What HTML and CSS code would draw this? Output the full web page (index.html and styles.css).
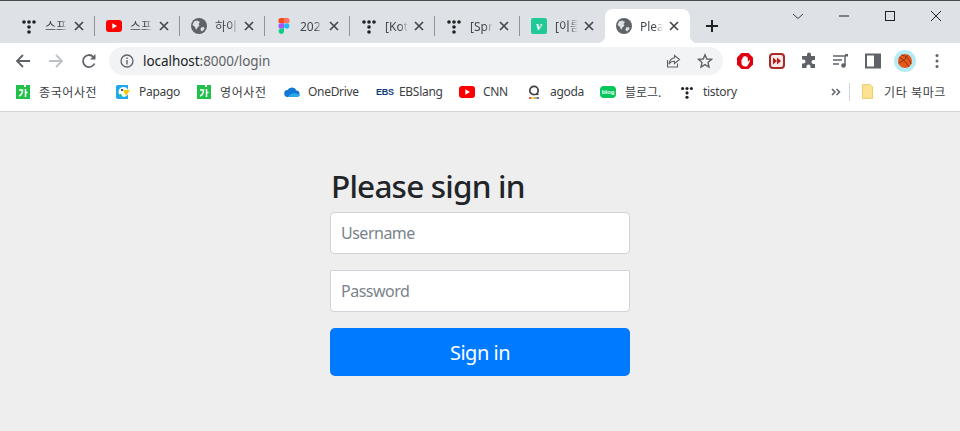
FILE: index.html
```html
<!DOCTYPE html>
<html lang="ko">
<head>
  <meta charset="UTF-8">
  <title>Please sign in</title>
  <link rel="stylesheet" href="styles.css">
</head>
<body>

<svg class="defs" width="0" height="0">
  <symbol id="tistory" viewBox="0 0 16 16">
    <circle cx="3" cy="4" r="1.8"/><circle cx="8" cy="4" r="1.8"/><circle cx="13" cy="4" r="1.8"/>
    <circle cx="8" cy="9" r="1.8"/><circle cx="8" cy="14" r="1.8"/>
  </symbol>
  <symbol id="globe" viewBox="0 0 16 16">
    <circle cx="8" cy="8" r="8" fill="#5f6368"/>
    <path d="M3 3.500 6 2.500 9 4 7.500 6 8.500 7.500 6.500 9.500 5 12 4 9 1.500 7ZM10 9.500 13 9 13.500 11 11 13.500 9.500 12Z" fill="#dee1e6"/>
  </symbol>
  <symbol id="youtube" viewBox="0 0 16 12">
    <rect width="16" height="12" rx="3" fill="#f00"/><path d="M6.300 3.300 11 6 6.300 8.700Z" fill="#fff"/>
  </symbol>
  <symbol id="naver" viewBox="0 0 14 14">
    <path d="M0 0H8V2H10V0H14V14H0Z" fill="#21c04a"/>
    <path d="M3 5H6.500C6.500 8 5.500 10 3 11M9.500 4V12M9.500 7.500H11.500" fill="none" stroke="#fff" stroke-width="1.500"/>
  </symbol>
  <symbol id="close" viewBox="0 0 10 10">
    <path d="M1 1 9 9M9 1 1 9" fill="none" stroke="#45494e" stroke-width="1.700"/>
  </symbol>
</svg>

<div class="tabstrip">
  <div class="tab">
    <svg class="favicon" fill="#202124"><use href="#tistory"/></svg>
    <span class="tab-title">스프</span><svg class="tab-close"><use href="#close"/></svg>
  </div>
  <div class="tab">
    <svg class="favicon"><use href="#youtube"/></svg>
    <span class="tab-title">스프</span><svg class="tab-close"><use href="#close"/></svg>
  </div>
  <div class="tab">
    <svg class="favicon"><use href="#globe"/></svg>
    <span class="tab-title">하이</span><svg class="tab-close"><use href="#close"/></svg>
  </div>
  <div class="tab">
    <svg class="favicon" viewBox="0 0 16 16">
      <path d="M5 0H8V5.300H5A2.650 2.650 0 0 1 5 0Z" fill="#f24e1e"/>
      <path d="M8 0H11A2.650 2.650 0 0 1 11 5.300H8Z" fill="#ff7262"/>
      <path d="M5 5.300H8V10.600H5A2.650 2.650 0 0 1 5 5.300Z" fill="#a259ff"/>
      <circle cx="10.700" cy="8" r="2.650" fill="#1abcfe"/>
      <path d="M5 10.600H8V13.300A2.650 2.650 0 1 1 5 10.600Z" fill="#0acf83"/>
    </svg>
    <span class="tab-title">202</span><svg class="tab-close"><use href="#close"/></svg>
  </div>
  <div class="tab">
    <svg class="favicon" fill="#202124"><use href="#tistory"/></svg>
    <span class="tab-title">[Kot</span><svg class="tab-close"><use href="#close"/></svg>
  </div>
  <div class="tab">
    <svg class="favicon" fill="#202124"><use href="#tistory"/></svg>
    <span class="tab-title">[Spr</span><svg class="tab-close"><use href="#close"/></svg>
  </div>
  <div class="tab tab-last">
    <span class="favicon velog">v</span>
    <span class="tab-title">[이름</span><svg class="tab-close"><use href="#close"/></svg>
  </div>
  <div class="tab tab-active">
    <svg class="favicon"><use href="#globe"/></svg>
    <span class="tab-title">Plea</span><svg class="tab-close"><use href="#close"/></svg>
  </div>
  <svg class="new-tab" viewBox="0 0 14 14"><path d="M7 1V13M1 7H13" fill="none" stroke="#202124" stroke-width="2"/></svg>
  <div class="window-controls">
    <svg viewBox="0 0 12 12"><path d="M1 4 6 8.500 11 4" fill="none" stroke="#3c4043"/></svg>
    <svg viewBox="0 0 12 12"><path d="M1 6H11" stroke="#202124"/></svg>
    <svg viewBox="0 0 12 12"><rect x="1.500" y="1.500" width="9" height="9" fill="none" stroke="#202124"/></svg>
    <svg viewBox="0 0 12 12"><path d="M1 1 11 11M11 1 1 11" stroke="#202124"/></svg>
  </div>
</div>

<div class="toolbar">
  <svg class="nav-icon" viewBox="0 0 16 16"><path d="M15 8H2M8 2 2 8 8 14" fill="none" stroke="#5f6368" stroke-width="1.800"/></svg>
  <svg class="nav-icon" viewBox="0 0 16 16"><path d="M1 8H14M8 2 14 8 8 14" fill="none" stroke="#bdc1c6" stroke-width="1.800"/></svg>
  <svg class="nav-icon" viewBox="0 0 16 16"><path d="M13.500 10.500A6 6 0 1 1 12.300 3.800" fill="none" stroke="#5f6368" stroke-width="1.800"/><path d="M14.500 1V6.500H9Z" fill="#5f6368"/></svg>
  <div class="omnibox">
    <svg class="info" viewBox="0 0 14 14"><circle cx="7" cy="7" r="6" fill="none" stroke="#5f6368" stroke-width="1.300"/><path d="M7 6V10.500M7 3.500V5" stroke="#5f6368" stroke-width="1.400"/></svg>
    <span class="url"><span class="url-host">localhost</span>:8000/login</span>
    <svg class="omni-icon" viewBox="0 0 16 16"><path d="M2.500 7V14H12.500V10.500" fill="none" stroke="#5f6368" stroke-width="1.100"/><path d="M9.500 2.500 14.500 6.500 9.500 10.500V8.300C7 8.300 5 9.300 4 11.300 4.300 7.800 6.500 5.300 9.500 4.800Z" fill="none" stroke="#5f6368" stroke-width="1.100"/></svg>
    <svg class="omni-icon" viewBox="0 0 16 16"><path d="M8 1.800 9.800 6 14.500 6.400 11 9.400 12 14 8 11.600 4 14 5 9.400 1.500 6.400 6.200 6Z" fill="none" stroke="#5f6368" stroke-width="1.400"/></svg>
  </div>
  <div class="extensions">
    <svg viewBox="0 0 18 18"><path d="M5.500 1H12.500L17 5.500V12.500L12.500 17H5.500L1 12.500V5.500Z" fill="#e2000f"/><path d="M5.500 7.500C5.500 7 6.500 7 6.500 7.500V5.500C6.500 5 7.500 5 7.500 5.500V4.500C7.500 4 9 4 9 4.500V4.500C9 4 10.500 4 10.500 4.500V5.500C10.500 5 11.800 5 11.800 5.500V10L13 8.500C13.500 8 14.300 8.500 14 9.200L12 13C11.500 14 10.500 14.500 9.300 14.500 7 14.500 5.500 13 5.500 11Z" fill="#fff"/></svg>
    <svg viewBox="0 0 18 18"><rect x="2" y="2" width="14" height="14" rx="3" fill="#fbe9e7" stroke="#a82a2a" stroke-width="2"/><path d="M5 5.500 9 9 5 12.500ZM9 5.500 13 9 9 12.500Z" fill="#b71c1c"/></svg>
    <svg viewBox="0 0 18 18"><path d="M7 2.500A2 2 0 0 1 11 2.500V4H15V8H13.500A2 2 0 0 0 13.500 12H15V16H10.500V14.500A2 2 0 0 0 6.500 14.500V16H2V11.500H3.500A2 2 0 0 0 3.500 7.500H2V4H7Z" fill="#5f6368"/></svg>
    <svg viewBox="0 0 18 18"><path d="M1 4H12M1 8H10M1 12H7" stroke="#5f6368" stroke-width="1.500"/><path d="M13 3V13" stroke="#5f6368" stroke-width="1.500"/><path d="M13 2H16V4.500H13Z" fill="#5f6368"/><circle cx="11.500" cy="13.500" r="2.300" fill="#5f6368"/></svg>
    <svg viewBox="0 0 18 18"><rect x="2" y="2.500" width="14" height="13" fill="#fff" stroke="#5f6368" stroke-width="2"/><rect x="10" y="2.500" width="6" height="13" fill="#5f6368"/></svg>
    <span class="avatar">
      <svg viewBox="0 0 14 14"><circle cx="7" cy="7" r="7" fill="#e8561c"/><path d="M1 3C5 5 9 9 11 13M3 1C7 1 12 5 13 10M0.500 9C4 8 8 5 10 1" fill="none" stroke="#5d2a10" stroke-width="0.700"/></svg>
    </span>
    <svg viewBox="0 0 18 18"><circle cx="9" cy="3.500" r="1.500" fill="#5f6368"/><circle cx="9" cy="9" r="1.500" fill="#5f6368"/><circle cx="9" cy="14.500" r="1.500" fill="#5f6368"/></svg>
  </div>
</div>

<div class="bookmarks">
  <div class="bookmark"><svg class="bm-icon"><use href="#naver"/></svg><span class="bm-ko">종국어사전</span></div>
  <div class="bookmark">
    <svg class="bm-icon" viewBox="0 0 14 14"><path d="M2 0H12V14H2C0.500 14 0 13 0 12V2C0 1 0.500 0 2 0Z" fill="#1fa8f1"/><circle cx="7.500" cy="7" r="5" fill="#fff"/><path d="M7 5H14L10 11Z" fill="#ffc800"/><circle cx="6" cy="5" r="1" fill="#222"/><path d="M3 9A4 4 0 0 0 7 12L5 9Z" fill="#19ce60"/></svg>
    <span class="bm-en">Papago</span>
  </div>
  <div class="bookmark"><svg class="bm-icon"><use href="#naver"/></svg><span class="bm-ko">영어사전</span></div>
  <div class="bookmark">
    <svg class="bm-icon bm-wide" viewBox="0 0 16 12"><path d="M4 11A3.500 3.500 0 0 1 3.500 4 5 5 0 0 1 12.500 4.500 3.300 3.300 0 0 1 13 11Z" fill="#0f78d4"/><path d="M4 11C6 7 10 6 16 9 15.800 10.300 14.500 11 13 11Z" fill="#28a8ea"/></svg>
    <span class="bm-en">OneDrive</span>
  </div>
  <div class="bookmark"><span class="bm-icon ebs">EBS</span><span class="bm-en">EBSlang</span></div>
  <div class="bookmark"><svg class="bm-icon bm-wide"><use href="#youtube"/></svg><span class="bm-en">CNN</span></div>
  <div class="bookmark">
    <svg class="bm-icon" viewBox="0 0 14 14"><circle cx="7" cy="5.500" r="4.200" fill="none" stroke="#3c4043" stroke-width="1.700"/><path d="M9 9.300H11.500" stroke="#3c4043" stroke-width="1.600"/><path d="M2 13H4.500" stroke="#e2231a" stroke-width="1.500"/><path d="M4.500 13H7" stroke="#ffc800" stroke-width="1.500"/><path d="M7 13H9.500" stroke="#6bbd45" stroke-width="1.500"/><path d="M9.500 13H12" stroke="#5c2d91" stroke-width="1.500"/></svg>
    <span class="bm-en">agoda</span>
  </div>
  <div class="bookmark">
    <span class="bm-icon blog">blog</span>
    <span>블로그.</span>
  </div>
  <div class="bookmark"><svg class="bm-icon" fill="#202124"><use href="#tistory"/></svg><span class="bm-en">tistory</span></div>
  <div class="bm-more">
    <svg viewBox="0 0 10 10"><path d="M1 2 4 5 1 8M5.500 2 8.500 5 5.500 8" fill="none" stroke="#5f6368" stroke-width="1.500"/></svg>
  </div>
  <div class="bm-folder">
    <svg viewBox="0 0 12 16"><path d="M0.500 0.500H9L11.500 3V15.500H0.500Z" fill="#fde293" stroke="#f0c75e"/></svg>
    <span class="bm-ko">기타 북마크</span>
  </div>
</div>

<main class="page">
  <form class="signin">
    <h2 class="signin-title">Please sign in</h2>
    <input class="field" type="text" placeholder="Username">
    <input class="field field-square" type="password" placeholder="Password">
    <button class="submit" type="button">Sign in</button>
  </form>
</main>

</body>
</html>
```

FILE: styles.css
```css
html, body {
  margin: 0;
  height: 431px;
  overflow: hidden;
}
body {
  font-family: "Noto Sans", "Noto Sans CJK KR", sans-serif;
  background-color: #eeeeee;
  color: #202124;
}
.defs {
  display: block;
  height: 0;
}

/* tab strip */
.tabstrip {
  display: flex;
  align-items: flex-end;
  height: 42px;
  padding-left: 10px;
  background-color: #dee1e6;
  border-top: 1px solid #4a4a4a;
}
.tab {
  display: flex;
  align-items: center;
  box-sizing: border-box;
  width: 85px;
  height: 34px;
  padding: 0 10px 0 11px;
  position: relative;
  font-size: 12px;
  color: #45494e;
}
.tab::after {
  content: "";
  position: absolute;
  right: 0;
  top: 7px;
  height: 20px;
  width: 1px;
  background-color: #90959b;
}
.tab-last::after {
  display: none;
}
.tab-active {
  background-color: #fff;
  border-radius: 8px 8px 0 0;
}
.tab-active::before,
.tab-active::after {
  content: "";
  position: absolute;
  top: auto;
  bottom: 0;
  width: 8px;
  height: 8px;
  background: radial-gradient(circle at 100% 0, transparent 8px, #fff 8.5px);
}
.tab-active::before {
  right: -8px;
}
.tab-active::after {
  right: auto;
  left: -8px;
  background: radial-gradient(circle at 0 0, transparent 8px, #fff 8.5px);
}
.favicon {
  flex: none;
  width: 16px;
  height: 16px;
}
.velog {
  display: block;
  background-color: #20c997;
  border-radius: 2px;
  color: #fff;
  font: italic bold 13px/15px "Liberation Serif", serif;
  text-align: center;
}
.tab-title {
  flex: none;
  width: 23px;
  margin-left: 8px;
  white-space: nowrap;
  -webkit-mask-image: linear-gradient(to right, #000 65%, transparent);
  mask-image: linear-gradient(to right, #000 65%, transparent);
}
.tab-close {
  flex: none;
  width: 10px;
  height: 10px;
  margin-left: 6px;
}
.new-tab {
  width: 14px;
  height: 14px;
  margin: 0 0 10px 15px;
}
.window-controls {
  display: flex;
  gap: 34px;
  margin-left: auto;
  align-self: flex-start;
  padding: 9px 18px 0 0;
}
.window-controls svg {
  width: 12px;
  height: 12px;
}

/* toolbar */
.toolbar {
  display: flex;
  align-items: center;
  height: 36px;
  padding-left: 15px;
  background-color: #fff;
}
.nav-icon {
  width: 16px;
  height: 16px;
  margin-right: 17px;
}
.nav-icon:nth-child(3) {
  margin-right: 12px;
}
.omnibox {
  display: flex;
  align-items: center;
  box-sizing: border-box;
  width: 614px;
  height: 28px;
  padding: 0 10px 0 11px;
  background-color: #f1f3f4;
  border-radius: 14px;
}
.info {
  width: 14px;
  height: 14px;
  margin-right: 9px;
}
.url {
  flex: 1;
  font-size: 13.5px;
  letter-spacing: -0.05px;
  color: #5f6368;
}
.url-host {
  color: #202124;
}
.omni-icon {
  width: 16px;
  height: 16px;
  margin-left: 16px;
}
.extensions {
  display: flex;
  align-items: center;
  gap: 14px;
  margin-left: 13px;
}
.extensions > svg {
  width: 18px;
  height: 18px;
}
.avatar {
  display: flex;
  align-items: center;
  justify-content: center;
  width: 22px;
  height: 22px;
  margin: 0 -2px;
  border-radius: 50%;
  background-color: #b5ebf2;
}
.avatar svg {
  width: 14px;
  height: 14px;
}

/* bookmarks bar */
.bookmarks {
  display: grid;
  grid-template-columns: 100px 81px 87px 92px 83px 68px 73px 80px 151px 19px 1fr;
  align-items: center;
  box-sizing: border-box;
  height: 33px;
  padding: 0 0 7px 16px;
  background-color: #fff;
  border-bottom: 1px solid #d2d4d7;
  font-size: 12px;
  color: #3c4043;
}
.bookmark {
  display: flex;
  align-items: center;
  white-space: nowrap;
}
.bm-ko {
  letter-spacing: 0.6px;
}
.bm-en {
  letter-spacing: -0.3px;
}
.bm-icon {
  flex: none;
  width: 14px;
  height: 14px;
  margin-right: 9px;
}
.bm-wide {
  width: 16px;
  height: 12px;
  margin-right: 8px;
}
.ebs {
  font: 900 9px/14px "Liberation Sans", sans-serif;
  letter-spacing: -0.3px;
  white-space: nowrap;
  color: #123d7a;
}
.blog {
  width: 16px;
  height: 12px;
  margin-right: 9px;
  background-color: #03c75a;
  border-radius: 4px;
  color: #fff;
  font: bold 6px/12px "Liberation Sans", sans-serif;
  text-align: center;
}
.bm-more {
  display: flex;
  height: 18px;
  align-items: center;
  border-right: 1px solid #d2d4d7;
}
.bm-more svg {
  width: 10px;
  height: 10px;
}
.bm-folder {
  display: flex;
  align-items: center;
  gap: 11px;
  margin-left: 12px;
  white-space: nowrap;
}
.bm-folder svg {
  width: 11px;
  height: 15px;
}

/* sign in form */
.page {
  display: flex;
  justify-content: center;
  padding-top: 55px;
}
.signin {
  width: 300px;
}
.signin-title {
  margin: 0 0 7px;
  padding-left: 1px;
  font-size: 31.5px;
  font-weight: 500;
  line-height: 38px;
  letter-spacing: -0.8px;
  color: #212529;
}
.field {
  display: block;
  box-sizing: border-box;
  width: 100%;
  height: 42px;
  margin-bottom: 16px;
  padding: 0 10px;
  background-color: #fff;
  border: 1px solid #ced4da;
  border-radius: 4px;
  font: 16px "Noto Sans", sans-serif;
  letter-spacing: -0.5px;
  color: #495057;
}
.field::placeholder {
  color: #7a838b;
  opacity: 1;
}
.field-square {
  border-radius: 0 0 4px 4px;
}
.submit {
  display: block;
  width: 100%;
  height: 48px;
  background-color: #007bff;
  border: none;
  border-radius: 5px;
  font: 20px "Noto Sans", sans-serif;
  letter-spacing: -0.5px;
  color: #fff;
}
```
